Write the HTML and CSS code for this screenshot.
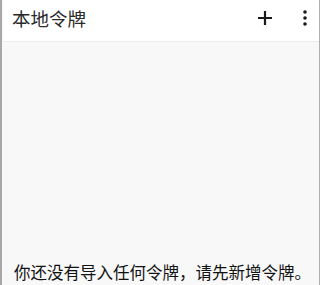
FILE: index.html
```html
<!DOCTYPE html>
<html lang="zh">
<head>
<meta charset="utf-8">
<link rel="stylesheet" href="styles.css">
</head>
<body>
<div class="frame">
  <header class="bar">
    <div class="title">本地令牌</div>
    <div class="actions">
      <svg class="plus" width="14" height="14" viewBox="0 0 14 14"><path d="M7 0V14M0 7H14" stroke="#1a1a1a" stroke-width="2.2"/></svg>
      <svg class="more" width="4" height="16" viewBox="0 0 4 16"><circle cx="2" cy="2" r="1.8" fill="#1a1a1a"/><circle cx="2" cy="8" r="1.8" fill="#1a1a1a"/><circle cx="2" cy="14" r="1.8" fill="#1a1a1a"/></svg>
    </div>
  </header>
  <main class="content">
    <p class="empty">你还没有导入任何令牌，请先新增令牌。</p>
  </main>
</div>
</body>
</html>
```
FILE: styles.css
```css
html, body { margin: 0; padding: 0; }
body { width: 320px; height: 285px; overflow: hidden; font-family: "Noto Sans CJK SC", "Noto Sans", sans-serif; }
.frame {
  box-sizing: border-box;
  width: 320px; height: 285px;
  border-left: 2px solid #a8a8a8;
  border-right: 1px solid #b0b0b0;
  padding-left: 1px;
  background: #f8f8f8;
  display: flex; flex-direction: column;
}
.bar {
  height: 41px;
  background: #fff;
  border-bottom: 1px solid #ececec;
  display: flex; align-items: center; justify-content: space-between;
  padding: 0 12px 0 9px;
  flex-shrink: 0;
}
.title { font-size: 18.5px; font-weight: 400; color: #2a2a2a; line-height: 1; margin-top: -4px; }
.actions { display: flex; align-items: center; gap: 31px; margin-top: -6px; }
.content { flex: 1; display: flex; align-items: flex-end; }
.empty { margin: 0 0 2px 11px; font-size: 16.5px; font-weight: 400; color: #111; line-height: 22px; white-space: nowrap; }
```
